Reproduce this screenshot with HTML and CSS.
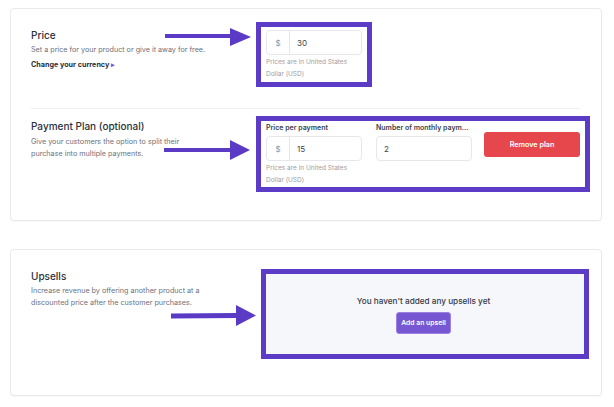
FILE: index.html
```html
<!DOCTYPE html>
<html>
<head>
<meta charset="utf-8">
<link rel="stylesheet" href="styles.css">
</head>
<body>
<div class="page">
  <section class="card card-pricing">
    <div class="row row-price">
      <div class="info info-price">
        <h2 class="title">Price</h2>
        <p class="desc">Set a price for your product or give it away for free.</p>
        <a class="link">Change your currency <span class="caret">&#9656;</span></a>
      </div>
      <div class="frame frame-price">
        <div class="field">
          <div class="input"><span class="prefix">$</span><span class="value">30</span></div>
          <p class="help">Prices are in United States<br>Dollar (USD)</p>
        </div>
      </div>
    </div>
    <div class="divider"></div>
    <div class="row row-plan">
      <div class="info info-plan">
        <h2 class="title">Payment Plan (optional)</h2>
        <p class="desc">Give your customers the option to split their<br>purchase into multiple payments.</p>
      </div>
      <div class="frame frame-plan">
        <div class="field">
          <label class="label">Price per payment</label>
          <div class="input"><span class="prefix">$</span><span class="value">15</span></div>
          <p class="help">Prices are in United States<br>Dollar (USD)</p>
        </div>
        <div class="field">
          <label class="label">Number of monthly paym...</label>
          <div class="input"><span class="value">2</span></div>
        </div>
        <button class="btn btn-danger">Remove plan</button>
      </div>
    </div>
  </section>

  <section class="card card-upsell">
    <div class="row row-upsell">
      <div class="info info-upsell">
        <h2 class="title">Upsells</h2>
        <p class="desc">Increase revenue by offering another product at a<br>discounted price after the customer purchases.</p>
      </div>
      <div class="frame frame-upsell">
        <div class="empty">
          <p class="empty-text">You haven't added any upsells yet</p>
          <button class="btn btn-primary">Add an upsell</button>
        </div>
      </div>
    </div>
  </section>
</div>

<svg class="arrows" width="614" height="407" viewBox="0 0 614 407">
  <g fill="#5b3bc6">
    <rect x="165" y="34" width="67" height="4"/>
    <polygon points="230,28 251,37 230,46"/>
    <rect x="164" y="148" width="68" height="4"/>
    <polygon points="230,140 250,150 230,160"/>
    <polygon points="171,313.5 238,313 238,318 171,318.5"/>
    <polygon points="236,305 256,315.5 236,326"/>
  </g>
</svg>
</body>
</html>
```

FILE: styles.css
```css
* { box-sizing: border-box; }
html, body { margin: 0; padding: 0; background: #ffffff; }
body {
  font-family: Inter, "Noto Sans", sans-serif;
  color: #2e3340;
  width: 614px;
  height: 407px;
  overflow: hidden;
  position: relative;
}
.page {
  padding: 8px 12px 0 10px;
  display: flex;
  flex-direction: column;
  gap: 28px;
}
.card {
  border: 1px solid #e8e9ed;
  border-radius: 4px;
  background: #fff;
  padding: 13px 20px 28px 20px;
  box-shadow: 0 1px 1px rgba(0,0,0,0.03);
}
.card-upsell { padding: 19px 20px 36px 20px; }
.row {
  display: grid;
  grid-template-columns: 225px auto;
  align-items: start;
}
.title {
  margin: 0;
  font-size: 10px;
  line-height: 14px;
  font-weight: 500;
  color: #2b303b;
}
.desc {
  margin: 2px 0 0;
  font-size: 7.2px;
  line-height: 12px;
  color: #6b707c;
}
.info-price { padding-top: 6px; }
.info-plan { padding-top: 3px; }
.info-plan .desc { margin-top: 3px; }
.info-upsell { padding-top: 0; }
.info-upsell .desc { margin-top: 2px; }
.link {
  display: block;
  margin-top: 3px;
  font-size: 7.2px;
  line-height: 12px;
  font-weight: 700;
  color: #2b303b;
}
.caret { color: #7b5bd6; font-size: 7px; }
.frame {
  border: 5px solid #5c3bc6;
  background: #fff;
}
.frame-price {
  width: 116px;
  padding: 3px 5px 2px 5px;
}
.frame-plan {
  width: 334px;
  padding: 1px 4px 1px 5px;
  display: flex;
  gap: 14px;
  align-items: flex-start;
}
.frame-plan .field + .field { margin-right: -1px; }
.frame-upsell {
  width: 328px;
  margin-left: 5px;
  height: 90px;
}
.field { width: 96px; display: flex; flex-direction: column; }
.label {
  font-size: 7px;
  line-height: 12px;
  font-weight: 600;
  color: #3a3f4b;
  margin-bottom: 2px;
  white-space: nowrap;
}
.input {
  height: 25px;
  border: 1px solid #e6e7eb;
  border-radius: 4px;
  display: flex;
  align-items: center;
  font-size: 8px;
  color: #3a3f4b;
}
.prefix {
  width: 23px;
  height: 100%;
  border-right: 1px solid #e6e7eb;
  display: flex;
  align-items: center;
  justify-content: center;
  color: #8a8f99;
}
.value { padding-left: 7px; }
.help {
  margin: 1px 0 0;
  font-size: 6.5px;
  line-height: 12px;
  color: #9a9ea8;
  white-space: nowrap;
}
.btn {
  border: none;
  border-radius: 3px;
  font-family: inherit;
  font-weight: 600;
  color: #fff;
  cursor: pointer;
  white-space: nowrap;
  padding: 0;
}
.btn-danger {
  margin-top: 10px;
  width: 96px;
  height: 25px;
  background: #e5474c;
  font-size: 7.2px;
  margin-left: -1px;
}
.empty {
  height: 100%;
  background: #f6f7fb;
  display: flex;
  flex-direction: column;
  align-items: center;
  justify-content: center;
  gap: 5px;
  padding-right: 3px;
}
.empty-text {
  margin: 0;
  font-size: 8.2px;
  line-height: 12px;
  font-weight: 500;
  color: #353a46;
}
.btn-primary {
  width: 55px;
  height: 22px;
  background: #7857d2;
  font-size: 6.8px;
  border: 1px solid #9b82e0;
}
.divider {
  height: 1px;
  background: #f0f0f3;
  margin: 21px 0 7px;
}
.arrows {
  position: absolute;
  left: 0;
  top: 0;
  pointer-events: none;
}
```
